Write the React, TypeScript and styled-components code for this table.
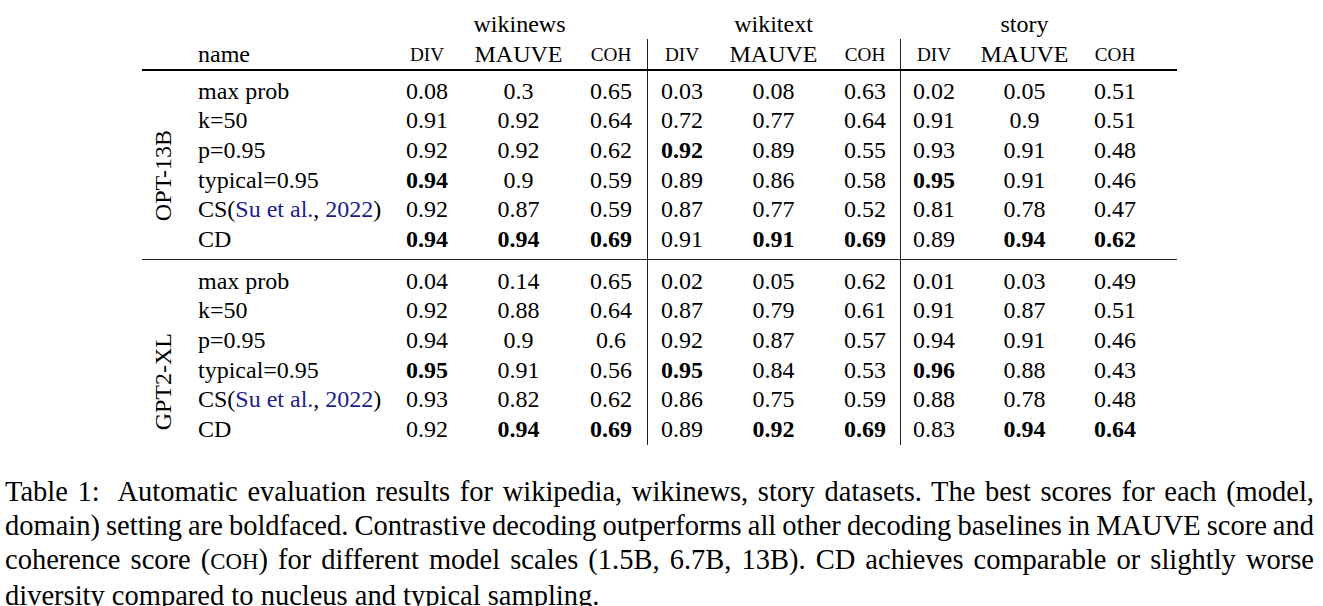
import React from "react";
import styled, { createGlobalStyle } from "styled-components";

const GlobalStyle = createGlobalStyle`
  html, body { margin: 0; padding: 0; background: #fff; overflow: hidden; }
  body { font-family: "Liberation Serif", "Times New Roman", serif; color: #000; }
`;

const COLS = "42px 208px 70px 113px 72px 70px 113px 70px 68px 113px 68px 28px";

const Page = styled.main`
  width: 1309px;
  padding: 9px 0 0 5px;
`;

const Table = styled.section`
  width: max-content;
  margin: 0 auto;
  font-size: 24px;
  line-height: 24px;
`;

const Header = styled.div`
  display: grid;
  grid-template-columns: ${COLS};
  grid-template-rows: 30px 30px;
  border-bottom: 2px solid #000;
`;

const Group = styled.div<{ $padTop: number; $padBottom: number; $rule?: boolean }>`
  display: grid;
  grid-template-columns: ${COLS};
  grid-template-rows: ${(p) => p.$padTop}px repeat(6, 29.6px) ${(p) => p.$padBottom}px;
  border-top: ${(p) => (p.$rule ? "1px solid #222" : "none")};
`;

const Cell = styled.div<{ $row: number | string; $col: number | string; $left?: boolean; $bold?: boolean }>`
  grid-row: ${(p) => p.$row};
  grid-column: ${(p) => p.$col};
  display: flex;
  align-items: center;
  justify-content: ${(p) => (p.$left ? "flex-start" : "center")};
  padding-left: ${(p) => (p.$left ? "14px" : "0")};
  font-weight: ${(p) => (p.$bold ? 700 : 400)};
  white-space: nowrap;
`;

const CellText = styled.span`
  white-space: pre;
  line-height: 24px;
`;

const SmallCap = styled.span`
  text-transform: uppercase;
  font-size: 0.8em;
`;

const VRule = styled.div<{ $col: number; $row?: string }>`
  grid-column: ${(p) => p.$col};
  grid-row: ${(p) => p.$row ?? "1 / -1"};
  border-left: 1px solid #222;
  pointer-events: none;
`;

const ModelLabel = styled.div<{ $pad: number }>`
  grid-column: 1;
  grid-row: 1 / -1;
  display: flex;
  flex-direction: column;
  justify-content: flex-end;
  align-items: center;
  padding-bottom: ${(p) => p.$pad}px;
`;

const Rotated = styled.span`
  writing-mode: vertical-rl;
  transform: rotate(180deg);
  line-height: 24px;
  white-space: nowrap;
`;

const Cite = styled.span`
  color: #1c1c8e;
`;

const Caption = styled.div`
  margin-top: 30px;
  font-size: 28.5px;
  line-height: 34px;
`;

const CaptionLine = styled.p<{ $last?: boolean }>`
  margin: 0;
  white-space: nowrap;
  text-align: justify;
  text-align-last: ${(p) => (p.$last ? "left" : "justify")};
  word-spacing: ${(p) => (p.$last ? "0" : "-0.09em")};
`;

type RowData = { name: React.ReactNode; values: string[] };

const csName = (
  <CellText>
    CS(<Cite>Su et al.</Cite>, <Cite>2022</Cite>)
  </CellText>
);

const groups: { model: string; padTop: number; padBottom: number; labelPad: number; rule: boolean; rows: RowData[] }[] = [
  {
    model: "OPT-13B",
    padTop: 5,
    padBottom: 5,
    labelPad: 37,
    rule: false,
    rows: [
      { name: "max prob", values: ["0.08", "0.3", "0.65", "0.03", "0.08", "0.63", "0.02", "0.05", "0.51"] },
      { name: "k=50", values: ["0.91", "0.92", "0.64", "0.72", "0.77", "0.64", "0.91", "0.9", "0.51"] },
      { name: "p=0.95", values: ["0.92", "0.92", "0.62", "*0.92", "0.89", "0.55", "0.93", "0.91", "0.48"] },
      { name: "typical=0.95", values: ["*0.94", "0.9", "0.59", "0.89", "0.86", "0.58", "*0.95", "0.91", "0.46"] },
      { name: csName, values: ["0.92", "0.87", "0.59", "0.87", "0.77", "0.52", "0.81", "0.78", "0.47"] },
      { name: "CD", values: ["*0.94", "*0.94", "*0.69", "0.91", "*0.91", "*0.69", "0.89", "*0.94", "*0.62"] },
    ],
  },
  {
    model: "GPT2-XL",
    padTop: 6.5,
    padBottom: 1,
    labelPad: 14,
    rule: true,
    rows: [
      { name: "max prob", values: ["0.04", "0.14", "0.65", "0.02", "0.05", "0.62", "0.01", "0.03", "0.49"] },
      { name: "k=50", values: ["0.92", "0.88", "0.64", "0.87", "0.79", "0.61", "0.91", "0.87", "0.51"] },
      { name: "p=0.95", values: ["0.94", "0.9", "0.6", "0.92", "0.87", "0.57", "0.94", "0.91", "0.46"] },
      { name: "typical=0.95", values: ["*0.95", "0.91", "0.56", "*0.95", "0.84", "0.53", "*0.96", "0.88", "0.43"] },
      { name: csName, values: ["0.93", "0.82", "0.62", "0.86", "0.75", "0.59", "0.88", "0.78", "0.48"] },
      { name: "CD", values: ["0.92", "*0.94", "*0.69", "0.89", "*0.92", "*0.69", "0.83", "*0.94", "*0.64"] },
    ],
  },
];

const domains = ["wikinews", "wikitext", "story"];

export default function App() {
  return (
    <>
      <GlobalStyle />
      <Page>
        <Table>
          <Header>
            {domains.map((d, i) => (
              <Cell key={d} $row={1} $col={`${3 + i * 3} / ${6 + i * 3}`}>
                {d}
              </Cell>
            ))}
            <Cell $row={2} $col={2} $left>
              name
            </Cell>
            {domains.map((d, i) => (
              <React.Fragment key={d}>
                <Cell $row={2} $col={3 + i * 3}>
                  <CellText>
                    <SmallCap>div</SmallCap>
                  </CellText>
                </Cell>
                <Cell $row={2} $col={4 + i * 3}>
                  MAUVE
                </Cell>
                <Cell $row={2} $col={5 + i * 3}>
                  <CellText>
                    <SmallCap>coh</SmallCap>
                  </CellText>
                </Cell>
              </React.Fragment>
            ))}
            <VRule $col={6} $row="2" />
            <VRule $col={9} $row="2" />
          </Header>
          {groups.map((g) => (
            <Group key={g.model} $padTop={g.padTop} $padBottom={g.padBottom} $rule={g.rule}>
              <ModelLabel $pad={g.labelPad}>
                <Rotated>{g.model}</Rotated>
              </ModelLabel>
              {g.rows.map((r, ri) => (
                <React.Fragment key={ri}>
                  <Cell $row={ri + 2} $col={2} $left>
                    {r.name}
                  </Cell>
                  {r.values.map((v, vi) => {
                    const bold = v.startsWith("*");
                    return (
                      <Cell key={vi} $row={ri + 2} $col={3 + vi} $bold={bold}>
                        {bold ? v.slice(1) : v}
                      </Cell>
                    );
                  })}
                </React.Fragment>
              ))}
              <VRule $col={6} />
              <VRule $col={9} />
            </Group>
          ))}
        </Table>
        <Caption>
          <CaptionLine>
            Table 1:&nbsp; Automatic evaluation results for wikipedia, wikinews, story datasets. The best scores for each (model,
          </CaptionLine>
          <CaptionLine>
            domain) setting are boldfaced. Contrastive decoding outperforms all other decoding baselines in MAUVE score and
          </CaptionLine>
          <CaptionLine>
            coherence score (<SmallCap>coh</SmallCap>) for different model scales (1.5B, 6.7B, 13B). CD achieves comparable or slightly worse
          </CaptionLine>
          <CaptionLine $last>diversity compared to nucleus and typical sampling.</CaptionLine>
        </Caption>
      </Page>
    </>
  );
}
